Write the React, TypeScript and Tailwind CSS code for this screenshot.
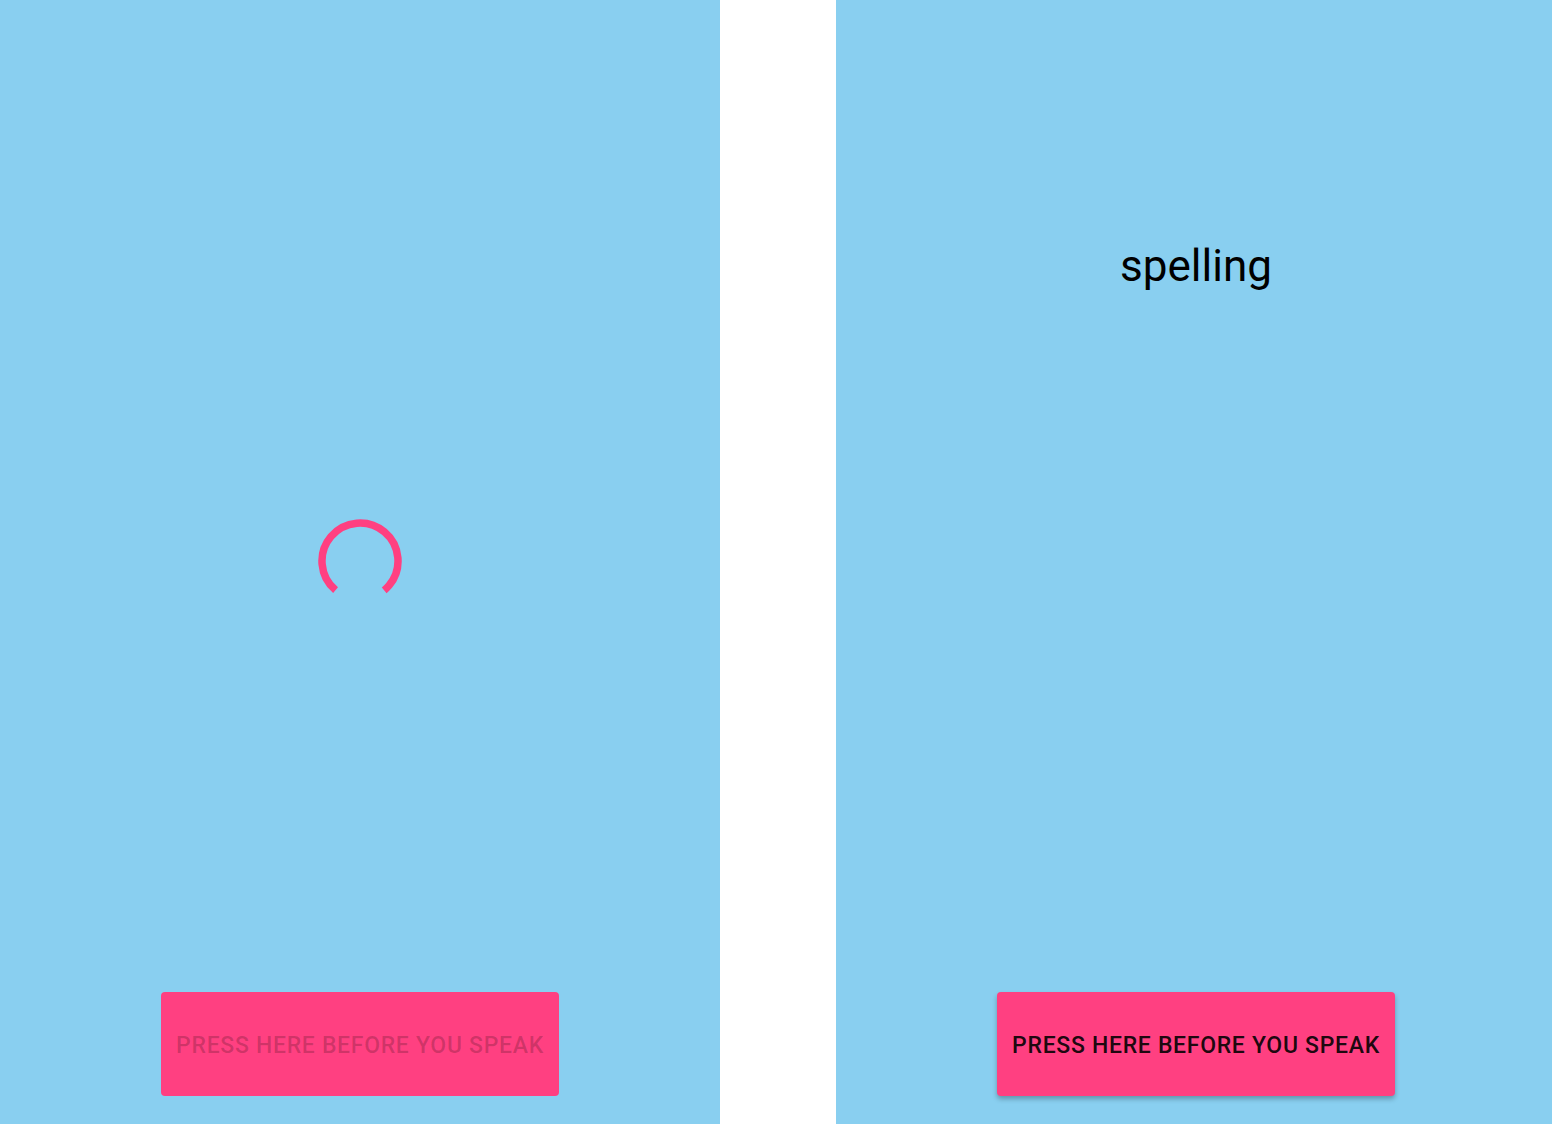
import React from 'react';

const SKY = 'bg-[#89cff0]';

const Spinner: React.FC = () => (
  <svg width="84" height="84" viewBox="0 0 84 84">
    <circle
      cx="42"
      cy="42"
      r="38"
      fill="none"
      stroke="#ff4081"
      strokeWidth="7.5"
      strokeDasharray="185.7 238.76"
      transform="rotate(130 42 42)"
    />
  </svg>
);

const SpeakButton: React.FC<{ disabled?: boolean }> = ({ disabled }) => (
  <button
    disabled={disabled}
    className={
      disabled
        ? 'w-[398px] h-[104px] pt-[4px] rounded-[4px] bg-[#ff4081] text-[23px] tracking-[0.03em] font-medium text-black/20 uppercase'
        : 'w-[398px] h-[104px] pt-[4px] rounded-[4px] bg-[#ff4081] text-[23px] tracking-[0.03em] font-medium text-black/90 uppercase shadow-[0_3px_5px_rgba(0,0,0,0.28)]'
    }
  >
    Press here before you speak
  </button>
);

const App: React.FC = () => {
  return (
    <div className="flex h-[1124px] w-[1552px] bg-white font-['Roboto',sans-serif] overflow-hidden">
      {/* loading state */}
      <div className={`w-[720px] h-full flex flex-col ${SKY}`}>
        <div className="flex-1 flex items-center justify-center pt-[129px]">
          <Spinner />
        </div>
        <div className="flex justify-center pb-[28px]">
          <SpeakButton disabled />
        </div>
      </div>

      <div className="w-[116px]" />

      {/* word shown */}
      <div className={`flex-1 h-full flex flex-col pl-[4px] ${SKY}`}>
        <div className="flex-1 flex justify-center pt-[239px]">
          <p className="text-[44px] leading-[54px] text-black">spelling</p>
        </div>
        <div className="flex justify-center pb-[28px]">
          <SpeakButton />
        </div>
      </div>
    </div>
  );
};

export default App;
